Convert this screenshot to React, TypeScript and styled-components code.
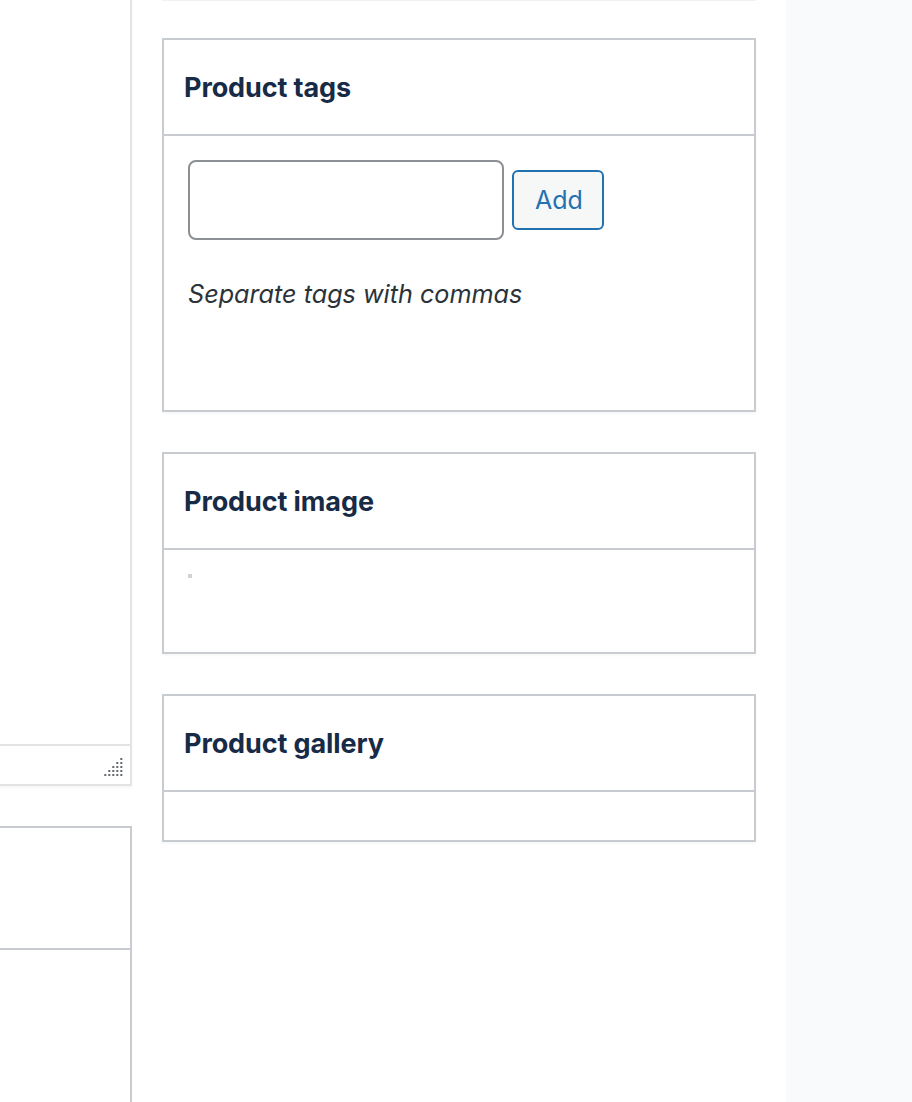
import React from "react";
import styled, { createGlobalStyle } from "styled-components";

const GlobalStyle = createGlobalStyle`
  html, body {
    margin: 0;
    padding: 0;
    background: #ffffff;
    overflow: hidden;
  }
  body {
    font-family: Inter, "Noto Sans", "Liberation Sans", sans-serif;
  }
  * { box-sizing: border-box; }
`;

const Page = styled.div`
  display: flex;
  gap: 30px;
  height: 1102px;
  overflow: hidden;
`;

const LeftColumn = styled.div`
  flex: 0 0 172px;
  margin-left: -40px;
  margin-top: -20px;
  display: flex;
  flex-direction: column;
  gap: 40px;
`;

const EditorBox = styled.div`
  border: 2px solid #e2e3e4;
  border-top: none;
  background: #fff;
  box-shadow: 0 2px 2px rgba(0, 0, 0, 0.04);
`;

const EditorArea = styled.div`
  height: 764px;
`;

const StatusBar = styled.div`
  height: 40px;
  border-top: 2px solid #e2e3e4;
  display: flex;
  justify-content: flex-end;
  align-items: flex-end;
  padding: 0 4px 4px 0;
`;

const LowerBox = styled.div`
  flex: 1;
  border: 2px solid #c8ccd1;
  border-bottom: none;
  background: #fff;
  margin-bottom: -10px;
`;

const LowerHeader = styled.div`
  height: 122px;
  border-bottom: 2px solid #c8ccd1;
`;

const RightColumn = styled.div`
  flex: 0 0 594px;
  display: flex;
  flex-direction: column;
  gap: 40px;
`;

const PrevEdge = styled.div`
  height: 1px;
  background: #f1f2f3;
  margin-bottom: -3px;
`;

const Box = styled.section`
  border: 2px solid #c8ccd1;
  background: #fff;
  box-shadow: 0 2px 2px rgba(0, 0, 0, 0.03);
`;

const BoxHeader = styled.div`
  height: 96px;
  padding: 0 20px;
  display: flex;
  align-items: center;
  border-bottom: 2px solid #c8ccd1;
`;

const Title = styled.h2`
  margin: 0;
  font-size: 27px;
  line-height: 1;
  font-weight: 700;
  color: #172a46;
  letter-spacing: -0.1px;
`;

const BoxBody = styled.div<{ $height: number }>`
  height: ${(p) => p.$height}px;
  padding: 24px;
`;

const TagRow = styled.div`
  display: flex;
  align-items: center;
  gap: 8px;
`;

const TagInput = styled.input`
  width: 316px;
  height: 80px;
  border: 2px solid #8c8f94;
  border-radius: 8px;
  background: #fff;
  font: inherit;
  font-size: 26px;
  padding: 0 16px;
  outline: none;
`;

const AddButton = styled.button`
  width: 92px;
  height: 60px;
  border: 2px solid #2271b1;
  border-radius: 6px;
  background: #f6f7f7;
  color: #2271b1;
  font-family: inherit;
  font-size: 25px;
  line-height: 1;
  padding: 0 0 0 2px;
  cursor: pointer;
`;

const Hint = styled.p`
  margin: 36px 0 0;
  font-size: 25.2px;
  line-height: 36px;
  font-style: italic;
  color: #2c3338;
`;

const Dot = styled.div`
  width: 4px;
  height: 4px;
  background: #d0d2d4;
`;

const Sidebar = styled.aside`
  flex: 1;
  background: #f9fafb;
`;

const ResizeGrip = () => {
  const dots: JSX.Element[] = [];
  for (let r = 0; r < 5; r++) {
    for (let c = 4 - r; c < 5; c++) {
      dots.push(
        <rect key={`${r}-${c}`} x={c * 4 + 0.3} y={r * 4} width={2} height={2} fill="#646970" />
      );
    }
  }
  return (
    <svg width="20" height="20" viewBox="0 0 20 20" style={{ marginRight: 2, marginBottom: 2 }}>
      {dots}
    </svg>
  );
};

export default function App() {
  return (
    <>
      <GlobalStyle />
      <Page>
        <LeftColumn>
          <EditorBox>
            <EditorArea />
            <StatusBar>
              <ResizeGrip />
            </StatusBar>
          </EditorBox>
          <LowerBox>
            <LowerHeader />
          </LowerBox>
        </LeftColumn>

        <RightColumn>
          <PrevEdge />
          <Box>
            <BoxHeader>
              <Title>Product tags</Title>
            </BoxHeader>
            <BoxBody $height={274}>
              <TagRow>
                <TagInput type="text" aria-label="Add new tag" />
                <AddButton type="button">Add</AddButton>
              </TagRow>
              <Hint>Separate tags with commas</Hint>
            </BoxBody>
          </Box>
          <Box>
            <BoxHeader>
              <Title>Product image</Title>
            </BoxHeader>
            <BoxBody $height={102}>
              <Dot />
            </BoxBody>
          </Box>
          <Box>
            <BoxHeader>
              <Title>Product gallery</Title>
            </BoxHeader>
            <BoxBody $height={48} />
          </Box>
        </RightColumn>

        <Sidebar />
      </Page>
    </>
  );
}
